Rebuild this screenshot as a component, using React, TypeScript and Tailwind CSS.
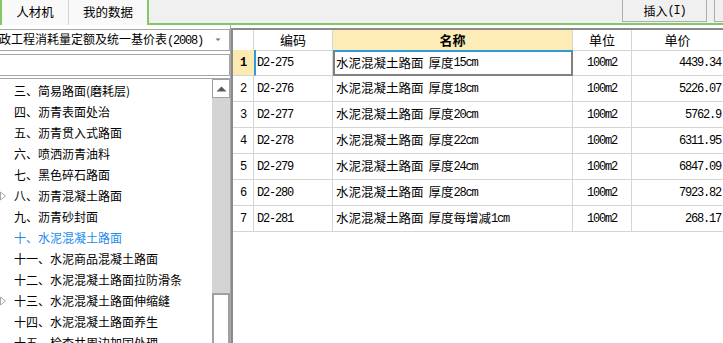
import React from "react";

const rows: [string, string, string, string][] = [
  ["D2-275", "水泥混凝土路面 厚度15cm", "100m2", "4439.34"],
  ["D2-276", "水泥混凝土路面 厚度18cm", "100m2", "5226.07"],
  ["D2-277", "水泥混凝土路面 厚度20cm", "100m2", "5762.9"],
  ["D2-278", "水泥混凝土路面 厚度22cm", "100m2", "6311.95"],
  ["D2-279", "水泥混凝土路面 厚度24cm", "100m2", "6847.09"],
  ["D2-280", "水泥混凝土路面 厚度28cm", "100m2", "7923.82"],
  ["D2-281", "水泥混凝土路面 厚度每增减1cm", "100m2", "268.17"],
];

const tree: { t: string; arrow?: boolean; sel?: boolean }[] = [
  { t: "三、简易路面(磨耗层)" },
  { t: "四、沥青表面处治" },
  { t: "五、沥青贯入式路面" },
  { t: "六、喷洒沥青油料" },
  { t: "七、黑色碎石路面" },
  { t: "八、沥青混凝土路面", arrow: true },
  { t: "九、沥青砂封面" },
  { t: "十、水泥混凝土路面", sel: true },
  { t: "十一、水泥商品混凝土路面" },
  { t: "十二、水泥混凝土路面拉防滑条" },
  { t: "十三、水泥混凝土路面伸缩缝", arrow: true },
  { t: "十四、水泥混凝土路面养生" },
  { t: "十五、检查井周边加固处理" },
];

const mono = "font-['Liberation_Mono',monospace] text-[12px] tracking-[-1.2px]";

function Mixed({ text }: { text: string }) {
  const parts = text.split(/([0-9A-Za-z.\-]+| )/);
  return (
    <>
      {parts.map((p, i) =>
        p === " " ? (
          <span key={i} className="inline-block w-[5px]" />
        ) : /^[0-9A-Za-z.\-]+$/.test(p) ? (
          <span key={i} className={mono}>
            {p}
          </span>
        ) : (
          <span key={i}>{p}</span>
        )
      )}
    </>
  );
}

export default function App() {
  return (
    <div className="w-[723px] h-[343px] overflow-hidden bg-white flex flex-col font-['Noto_Sans_CJK_SC',sans-serif] text-black">
      {/* top bar */}
      <div className="h-[25px] flex shrink-0">
        <div className="flex h-full border-l-2 border-r-2 border-[#82c866] bg-[#f9f9f9] text-[12.5px]">
          <div className="w-[67px] flex items-center justify-center border-r border-[#d6d6d6]">人材机</div>
          <div className="w-[78px] flex items-center justify-center">我的数据</div>
        </div>
        <div className="flex-1 h-full bg-[#f0f0f0] border-b-2 border-[#82c866] flex items-start pl-[473px] overflow-hidden">
          <div className="w-[85px] h-[22px] shrink-0 border border-t-0 border-[#acacac] bg-[#f0f0f0] flex items-center justify-center text-[12px]">
            插入<span className={mono}>(I)</span>
          </div>
          <div className="w-[40px] h-[22px] shrink-0 ml-[7px] border border-t-0 border-[#acacac] bg-[#f0f0f0]" />
        </div>
      </div>

      {/* main */}
      <div className="flex-1 flex min-h-0">
        {/* left panel */}
        <div className="w-[231px] shrink-0 flex flex-col border-r border-[#a8a8a8]">
          <div className="mt-[4px] h-[22px] border-y border-r border-[#a5a5a5] flex items-center overflow-hidden">
            <div className="flex-1 overflow-hidden whitespace-nowrap text-[12px]">
              <span className="inline-block ml-[-13px]">
                市政工程消耗量定额及统一基价表<span className={mono}>(2008)</span>
              </span>
            </div>
            <svg width="16" height="6" viewBox="0 0 16 6" className="shrink-0 mr-[3px]">
              <path d="M5.5 1.5 L10.5 1.5 L8 4 Z" fill="#707070" />
            </svg>
          </div>
          <div className="mt-[3px] h-[22px] border-y border-r border-[#a5a5a5] bg-white" />
          <div className="mt-[2px] flex-1 border-t border-[#a5a5a5] flex min-h-0">
            <div className="flex-1 pt-[1px] overflow-hidden">
              {tree.map((it, i) => (
                <div key={i} className="h-[21px] flex items-center text-[12px] whitespace-nowrap">
                  <div className="w-[14px] h-full flex items-center shrink-0">
                    {it.arrow && (
                      <svg width="7" height="10" viewBox="0 0 7 10">
                        <path d="M0.5 1 L5.5 5 L0.5 9 Z" fill="white" stroke="#a8a8a8" />
                      </svg>
                    )}
                  </div>
                  <span className={it.sel ? "text-[#1b8ceb]" : ""}>{it.t}</span>
                </div>
              ))}
            </div>
            <div className="w-[18px] shrink-0 flex flex-col bg-[#d4d4d4]">
              <div className="h-[19px] border border-[#a0a0a0] bg-white flex items-center justify-center shrink-0">
                <svg width="11" height="6" viewBox="0 0 11 6">
                  <path d="M0.5 5.5 L5.5 0.5 L10.5 5.5 Z" fill="#5a5a5a" />
                </svg>
              </div>
              <div className="h-[195px] shrink-0" />
              <div className="flex-1 border-2 border-[#a0a0a0] border-b-0 bg-white" />
            </div>
          </div>
        </div>

        {/* table */}
        <div className="flex-1 mt-[3px] border-l-2 border-t-2 border-[#8a8a8a] flex flex-col min-w-0">
          <div className="grid grid-cols-[21px_79px_240px_59px_1fr] h-[20px] text-[13px]">
            <div className="border-r border-b border-[#d4d4d4]" />
            <div className="border-r border-b border-[#d4d4d4] flex items-center justify-center">编码</div>
            <div className="border-r border-b border-[#d4d4d4] bg-[#fdecb6] flex items-center justify-center font-bold">名称</div>
            <div className="border-r border-b border-[#d4d4d4] flex items-center justify-center">单位</div>
            <div className="border-b border-[#d4d4d4] flex items-center justify-center">单价</div>
          </div>
          {rows.map((r, i) => {
            const first = i === 0;
            return (
              <div key={i} className="grid grid-cols-[21px_79px_240px_59px_1fr] h-[26px] text-[12.5px]">
                <div
                  className={
                    first
                      ? "border-b border-[#d4d4d4] bg-[#fdeab2] flex items-center justify-center font-['Liberation_Mono',monospace] font-bold text-[12px]"
                      : "border-r border-b border-[#d4d4d4] flex items-center justify-center " + mono
                  }
                >
                  {i + 1}
                </div>
                <div
                  className={
                    "border-r border-b border-[#d4d4d4] flex items-center " +
                    (first ? "border-l-2 border-l-[#2e9ad8] pl-[1px]" : "pl-[3px]")
                  }
                >
                  <span className={mono}>{r[0]}</span>
                </div>
                <div
                  className={
                    first
                      ? "border-2 border-[#808080] border-t-[#2e9ad8] flex items-center pl-[1px] whitespace-nowrap"
                      : "border-r border-b border-[#d4d4d4] flex items-center pl-[3px] whitespace-nowrap"
                  }
                >
                  <Mixed text={r[1]} />
                </div>
                <div className="border-r border-b border-[#d4d4d4] flex items-center justify-center">
                  <span className={mono}>{r[2]}</span>
                </div>
                <div className="border-b border-[#d4d4d4] flex items-center justify-end pr-[2px]">
                  <span className={mono}>{r[3]}</span>
                </div>
              </div>
            );
          })}
        </div>
      </div>
    </div>
  );
}
